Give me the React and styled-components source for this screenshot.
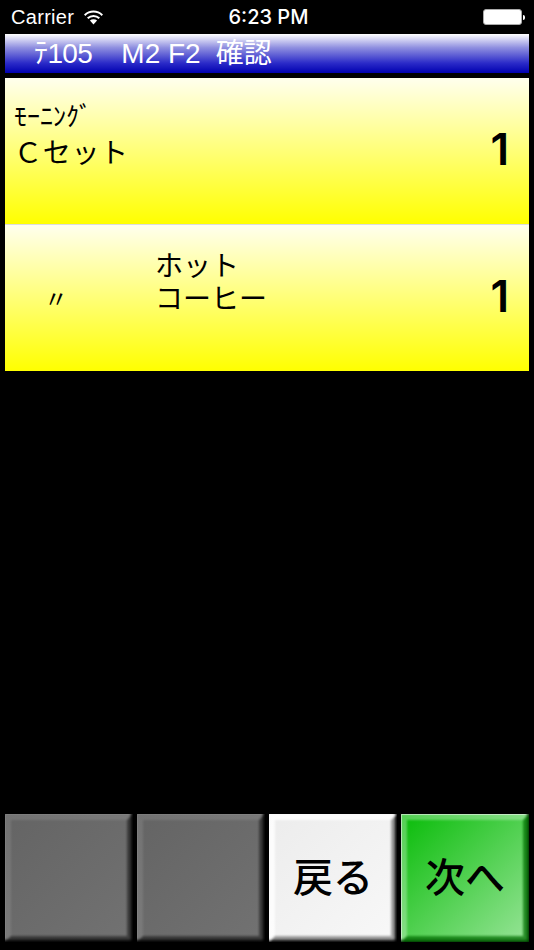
import React from 'react';
import styled, { createGlobalStyle } from 'styled-components';

const JP = '"Noto Sans CJK JP", sans-serif';
const HEAD = '"Liberation Sans", "Noto Sans CJK JP", sans-serif';

const GlobalStyle = createGlobalStyle`
  html, body {
    margin: 0;
    padding: 0;
    background: #000;
  }
`;

export default function App() {
  return (
    <Screen>
      <GlobalStyle />
      <StatusBar>
        <StatusLeft>
          <span>Carrier</span>
          <svg width="21" height="15" viewBox="0 0 20 15">
            <path d="M10 14.5 L6.4 10.6 A5.2 5.2 0 0 1 13.6 10.6 Z" fill="#fff" />
            <path d="M4.2 8.3 A8.4 8.4 0 0 1 15.8 8.3" fill="none" stroke="#fff" strokeWidth="2" />
            <path d="M1.2 5.2 A12.6 12.6 0 0 1 18.8 5.2" fill="none" stroke="#fff" strokeWidth="2" />
          </svg>
        </StatusLeft>
        <Clock>6:23 PM</Clock>
        <Battery>
          <BatteryBody />
          <BatteryTip />
        </Battery>
      </StatusBar>
      <Header>
        <HeaderText $tight>ﾃ105</HeaderText>
        <HeaderText $gap={29}>M2 F2</HeaderText>
        <HeaderText $gap={15}>確認</HeaderText>
      </Header>
      <Rows>
        <Row>
          <FirstItem>
            <SmallName>ﾓｰﾆﾝｸﾞ</SmallName>
            <Name>Ｃセット</Name>
          </FirstItem>
          <Qty>1</Qty>
        </Row>
        <Row>
          <Ditto>〃</Ditto>
          <LongName>ホット<br />コーヒー</LongName>
          <Qty>1</Qty>
        </Row>
      </Rows>
      <Spacer />
      <Buttons>
        <Key $kind="off" />
        <Key $kind="off" />
        <Key $kind="back">戻る</Key>
        <Key $kind="next">次へ</Key>
      </Buttons>
    </Screen>
  );
}

const Screen = styled.div`
  width: 534px;
  height: 950px;
  display: flex;
  flex-direction: column;
  background: #000;
  overflow: hidden;
`;

const StatusBar = styled.div`
  height: 34px;
  padding: 0 9px 0 11px;
  display: grid;
  grid-template-columns: 1fr auto 1fr;
  align-items: center;
  color: #fff;
  font-family: "Liberation Sans", sans-serif;
  font-size: 20px;
`;

const StatusLeft = styled.div`
  display: flex;
  align-items: center;
  gap: 9px;
  letter-spacing: 0.3px;
`;

const Clock = styled.div`
  margin-left: 1px;
  font-family: "Inter", sans-serif;
  font-weight: 500;
  font-size: 20px;
`;

const Battery = styled.div`
  justify-self: end;
  display: flex;
  align-items: center;
  gap: 1px;
`;

const BatteryBody = styled.div`
  width: 37px;
  height: 14px;
  background: #fff;
  border: 1px solid #aaa;
  border-radius: 3px;
`;

const BatteryTip = styled.div`
  width: 2px;
  height: 5px;
  background: #fff;
  border-radius: 0 2px 2px 0;
`;

const Header = styled.div`
  height: 39px;
  margin: 0 5px;
  padding-left: 29px;
  box-sizing: border-box;
  display: flex;
  align-items: center;
  background: linear-gradient(to bottom, #ffffff 0%, #8f8fe0 35%, #2a2ac8 75%, #0000b0 100%);
  color: #fff;
`;

const HeaderText = styled.span`
  margin-left: ${(p) => p.$gap || 0}px;
  font-family: ${HEAD};
  font-size: 28px;
  line-height: 39px;
  letter-spacing: ${(p) => (p.$tight ? '-0.6px' : '0')};
`;

const Rows = styled.div`
  margin: 5px 5px 0;
  display: flex;
  flex-direction: column;
`;

const Row = styled.div`
  height: 146px;
  padding: 0 20px 0 9px;
  box-sizing: border-box;
  display: flex;
  align-items: flex-start;
  background: linear-gradient(to bottom, #ffffee 0%, #ffff00 100%);
  color: #000;

  & + & {
    height: 147px;
    border-top: 1px solid #ddd;
  }
`;

const FirstItem = styled.div`
  padding-top: 22px;
  display: flex;
  flex-direction: column;
  gap: 3px;
`;

const SmallName = styled.div`
  font-family: ${JP};
  font-size: 26px;
  line-height: 30px;
`;

const Name = styled.div`
  font-family: ${JP};
  font-size: 28px;
  line-height: 36px;
  letter-spacing: 0.7px;
`;

const LongName = styled.div`
  padding-top: 23px;
  font-family: ${JP};
  font-size: 28px;
  line-height: 33px;
`;

const Ditto = styled.div`
  width: 141px;
  padding: 55px 0 0 30px;
  box-sizing: border-box;
  font-family: ${JP};
  font-size: 24px;
  line-height: 36px;
`;

const Qty = styled.div`
  align-self: center;
  margin: -4px 0 0 auto;
  font-family: "Inter", sans-serif;
  font-weight: 600;
  font-size: 44px;
`;

const Spacer = styled.div`
  flex: 1;
`;

const keyStyles = {
  off: {
    bg: 'linear-gradient(135deg, #646464, #727272)',
    light: 'rgba(255, 255, 255, 0.1)',
    dark: 'rgba(0, 0, 0, 0.45)',
    edge: 'inset -2px -2px 3px #000, inset 1px 1px 1px rgba(255, 255, 255, 0.15)',
  },
  back: {
    bg: 'linear-gradient(135deg, #ececec, #f8f8f8)',
    light: 'rgba(255, 255, 255, 0.8)',
    dark: 'rgba(0, 0, 0, 0.35)',
    edge: 'inset -2px -2px 3px #000, inset 1px 1px 1px #fff',
  },
  next: {
    bg: 'linear-gradient(135deg, #08bc08, #98e498)',
    light: 'rgba(255, 255, 255, 0.3)',
    dark: 'rgba(0, 110, 0, 0.7)',
    edge: 'inset -2px -2px 3px #001e00, inset 1px 1px 1px rgba(255, 255, 255, 0.7)',
  },
};

const Buttons = styled.div`
  margin: 0 5px 8px;
  display: grid;
  grid-template-columns: repeat(4, 128px);
  gap: 4px;
`;

const Key = styled.div`
  position: relative;
  height: 128px;
  padding-bottom: 6px;
  box-sizing: border-box;
  display: flex;
  align-items: center;
  justify-content: center;
  overflow: hidden;
  background: ${(p) => keyStyles[p.$kind].bg};
  box-shadow: ${(p) => keyStyles[p.$kind].edge};
  color: #000;
  font-family: ${JP};
  font-weight: 500;
  font-size: 40px;

  &::before {
    content: "";
    position: absolute;
    inset: 0;
    border-style: solid;
    border-width: 6px;
    border-color: ${(p) => keyStyles[p.$kind].light} ${(p) => keyStyles[p.$kind].dark}
      ${(p) => keyStyles[p.$kind].dark} ${(p) => keyStyles[p.$kind].light};
    filter: blur(1.2px);
  }
`;
